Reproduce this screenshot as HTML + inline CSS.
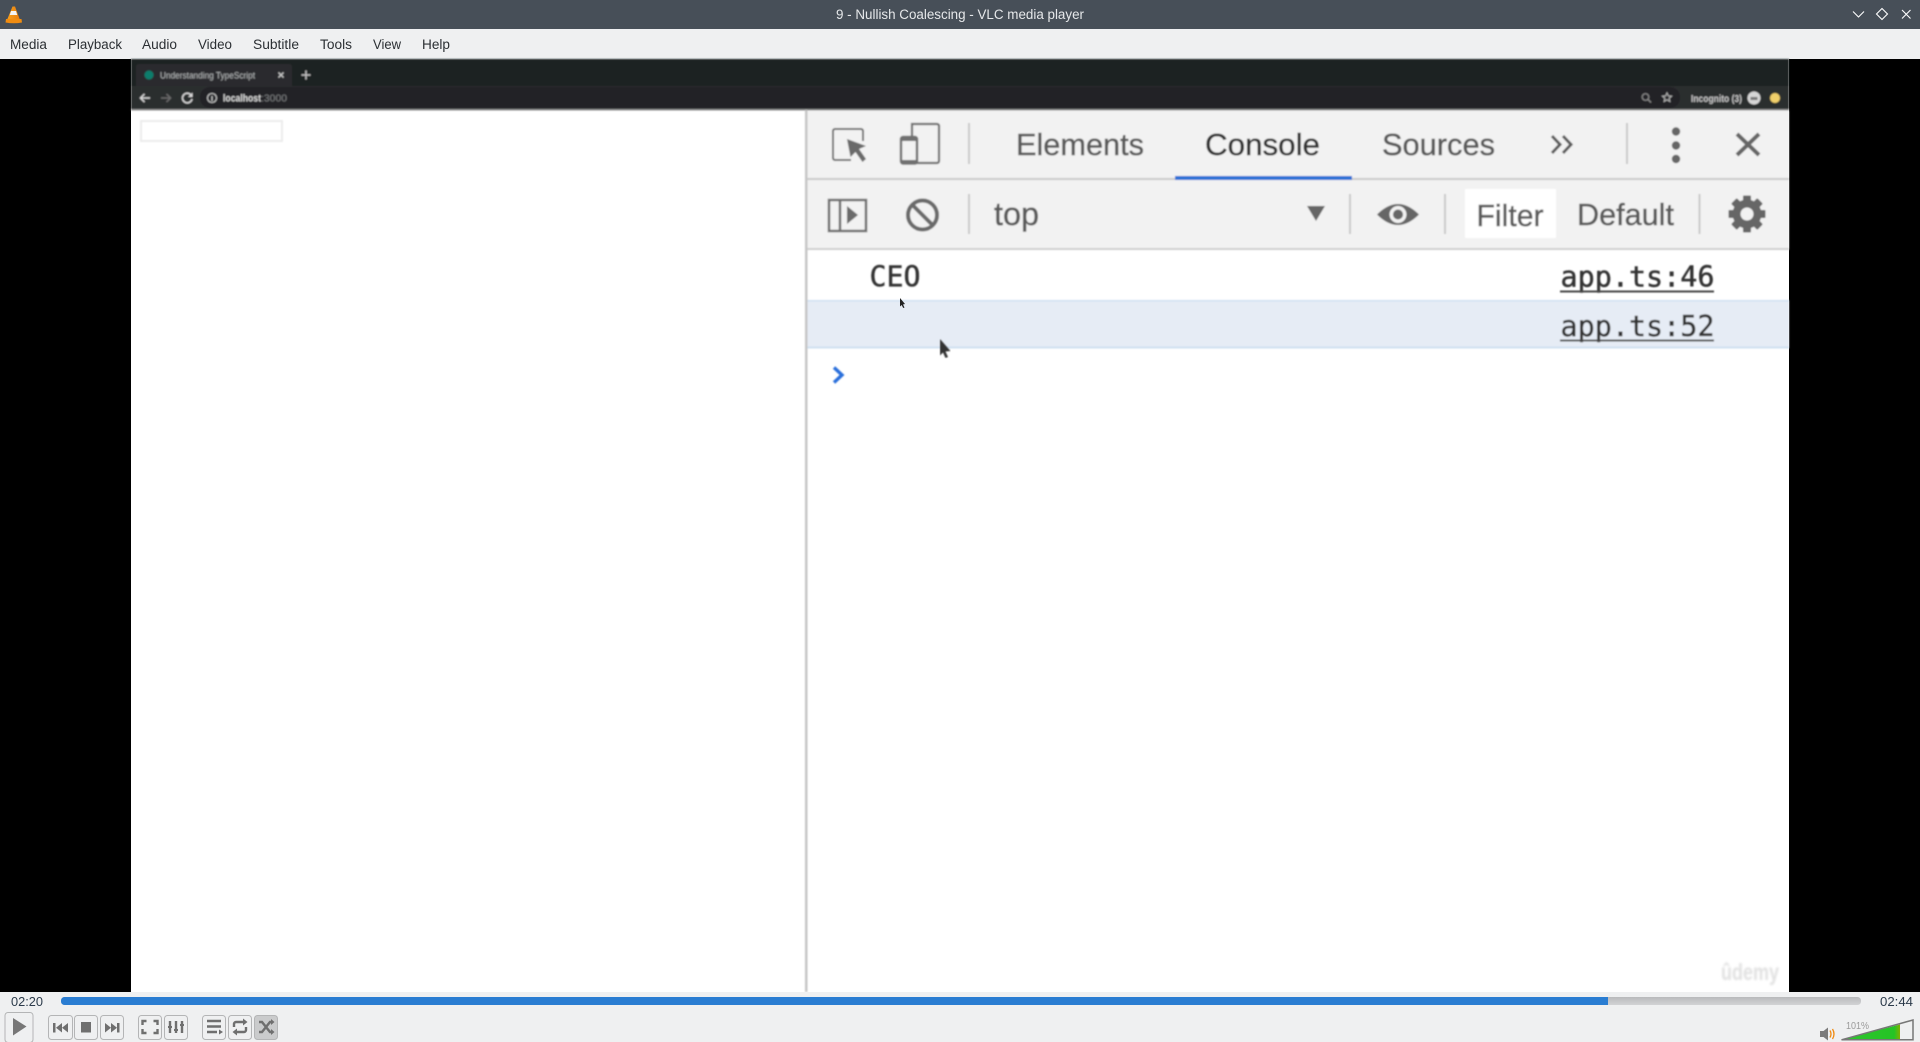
<!DOCTYPE html>
<html><head><meta charset="utf-8"><title>9 - Nullish Coalescing - VLC media player</title>
<style>
html,body{margin:0;padding:0;background:#000;width:1920px;height:1042px;overflow:hidden}
svg{display:block}
text{font-family:"Liberation Sans",sans-serif}
.m{font-size:13.5px;fill:#2b2f33}
.d{font-size:31px;fill:#5a5a5a;stroke:#5a5a5a;stroke-width:.45}
.mono{font-family:"DejaVu Sans Mono","Liberation Mono",monospace;font-size:28.5px;fill:#333;stroke:#333;stroke-width:.45}
.b{fill:#eff0f1;stroke:#b4b5b6;stroke-width:1}
.i{fill:#6f6f6f}
.s{fill:none;stroke:#6f6f6f;stroke-width:2.4}
</style></head><body>
<svg width="1920" height="1042" viewBox="0 0 1920 1042" xmlns="http://www.w3.org/2000/svg">
<defs>
<filter id="bl" x="-2%" y="-2%" width="104%" height="104%"><feGaussianBlur stdDeviation="0.7"/></filter>
<filter id="bl3" x="-20%" y="-20%" width="140%" height="140%"><feGaussianBlur stdDeviation="1.1"/></filter>
<linearGradient id="vg" x1="0" x2="1" y1="0" y2="0"><stop offset="0" stop-color="#2fc42f"/><stop offset=".9" stop-color="#25c425"/><stop offset="1" stop-color="#80b000"/></linearGradient>
<linearGradient id="pg" x1="0" x2="0" y1="0" y2="1"><stop offset="0" stop-color="#b9babc"/><stop offset="1" stop-color="#d2d3d5"/></linearGradient>
<linearGradient id="cone" x1="0" x2="1" y1="0" y2="0"><stop offset="0" stop-color="#f7a11e"/><stop offset="1" stop-color="#e87d0d"/></linearGradient>
</defs>

<!-- title bar -->
<rect x="0" y="0" width="1920" height="29" fill="#474f58"/>
<g>
<path d="M12.500 6.500h2.500L20 20H7z" fill="url(#cone)"/>
<path d="M11 11h5l1.200 4H9.800z" fill="#f4f4f4"/>
<path d="M6 19h15.500l.5 3.500q-8 1.500-16.500 0z" fill="#f08c10"/>
</g>
<text x="960" y="19" text-anchor="middle" textLength="248" lengthAdjust="spacingAndGlyphs" style="font-size:13.5px;fill:#e6e8ea">9 - Nullish Coalescing - VLC media player</text>
<path d="M1853 11.500l5.500 5.500 5.500-5.500" fill="none" stroke="#fff" stroke-width="1.100"/>
<path d="M1882 8.500l5.500 5.500-5.500 5.500-5.500-5.500z" fill="none" stroke="#fff" stroke-width="1.100"/>
<path d="M1902 10l8.500 8.500M1910.500 10l-8.500 8.500" fill="none" stroke="#fff" stroke-width="1.100"/>

<!-- menu bar -->
<rect x="0" y="29" width="1920" height="30" fill="#eff0f1"/>
<g class="m">
<text class="m" x="10" y="49" textLength="37" lengthAdjust="spacingAndGlyphs">Media</text>
<text class="m" x="68" y="49" textLength="54" lengthAdjust="spacingAndGlyphs">Playback</text>
<text class="m" x="142" y="49" textLength="35" lengthAdjust="spacingAndGlyphs">Audio</text>
<text class="m" x="198" y="49" textLength="34" lengthAdjust="spacingAndGlyphs">Video</text>
<text class="m" x="253" y="49" textLength="46" lengthAdjust="spacingAndGlyphs">Subtitle</text>
<text class="m" x="320" y="49" textLength="32" lengthAdjust="spacingAndGlyphs">Tools</text>
<text class="m" x="373" y="49" textLength="28" lengthAdjust="spacingAndGlyphs">View</text>
<text class="m" x="422" y="49" textLength="28" lengthAdjust="spacingAndGlyphs">Help</text>
</g>

<!-- video -->
<rect x="0" y="59" width="1920" height="933" fill="#000"/>
<rect x="131" y="59" width="1658" height="933" fill="#fff"/>

<g filter="url(#bl)">
<!-- chrome strip -->
<rect x="131" y="59" width="1658" height="27" fill="#1d2022"/>
<path d="M136 86v-19q0-3 3-3h150q3 0 3 3v19z" fill="#2a2c2e"/>
<circle cx="149" cy="75" r="4.500" fill="#0f7d6c"/>
<text x="160" y="78.500" textLength="95" lengthAdjust="spacingAndGlyphs" style="font-size:9.5px;fill:#b4b6b8">Understanding TypeScript</text>
<path d="M278.500 72.500l5 5M283.500 72.500l-5 5" stroke="#c8c8c8" stroke-width="1.300"/>
<path d="M306 70.500v9M301.500 75h9" stroke="#c0c0c0" stroke-width="1.500"/>
<rect x="131" y="86" width="1658" height="23" fill="#2b2d2f"/>
<rect x="131" y="109" width="1658" height="1.500" fill="#8d8d8d"/>
<rect x="200" y="87" width="1480" height="21" rx="10" fill="#222426"/>
<path d="M150 98h-9M144.500 94l-4 4 4 4" fill="none" stroke="#d8d8d8" stroke-width="1.500"/>
<path d="M161 98h9M166.500 94l4 4-4 4" fill="none" stroke="#6a6a6a" stroke-width="1.500"/>
<path d="M191 95a4.800 4.800 0 1 0 1 4" fill="none" stroke="#d8d8d8" stroke-width="1.500"/><path d="M192.500 92.500v4.500h-4.500z" fill="#d8d8d8"/>
<circle cx="212" cy="98" r="4.500" fill="none" stroke="#c8c8c8" stroke-width="1.100"/><path d="M212 96v5" stroke="#c8c8c8" stroke-width="1.200"/>
<text x="223" y="101.500" textLength="38" lengthAdjust="spacingAndGlyphs" style="font-size:10.5px;fill:#d8d8d8;font-weight:bold">localhost</text>
<text x="261" y="101.500" textLength="26" lengthAdjust="spacingAndGlyphs" style="font-size:10.5px;fill:#7a7c7e">:3000</text>
<circle cx="1645.500" cy="97" r="3.300" fill="none" stroke="#8a8a8a" stroke-width="1.200"/><path d="M1648 99.500l3 3" stroke="#8a8a8a" stroke-width="1.300"/>
<path d="M1667 93l1.300 2.900 3.200.3-2.400 2.100.7 3.100-2.800-1.600-2.800 1.600.7-3.100-2.400-2.100 3.200-.3z" fill="none" stroke="#b0b0b0" stroke-width="1.100"/>
<text x="1691" y="102" textLength="51" lengthAdjust="spacingAndGlyphs" style="font-size:10.5px;fill:#c4c4c4;font-weight:bold">Incognito (3)</text>
<circle cx="1754" cy="98" r="6.500" fill="#d6d6d6"/><path d="M1750.500 97h7v3h-7z" fill="#777"/>
<circle cx="1775" cy="98" r="5" fill="#f0cf6a"/>

<!-- page input -->
<rect x="141" y="121" width="141" height="20" fill="#fff" stroke="#ececec" stroke-width="2"/>

<!-- devtools -->
<rect x="805" y="110" width="2.500" height="882" fill="#c6c6c6"/>
<rect x="807.500" y="111" width="981.500" height="67" fill="#f2f2f2"/>
<rect x="807.500" y="178" width="981.500" height="2" fill="#c9c9c9"/>
<rect x="807.500" y="180" width="981.500" height="68" fill="#f2f2f2"/>
<rect x="807.500" y="248" width="981.500" height="2" fill="#cfcfcf"/>

<!-- inspect -->
<path d="M851 160h-16a2 2 0 0 1-2-2v-27a2 2 0 0 1 2-2h26a2 2 0 0 1 2 2v10" fill="none" stroke="#707070" stroke-width="2"/>
<path d="M847 139l19 7-7 3 7 10-3.500 3-7-10-5 5z" fill="#6a6a6a"/>
<!-- device -->
<path d="M912 136v-12h25a2 2 0 0 1 2 2v35a2 2 0 0 1-2 2h-21" fill="none" stroke="#707070" stroke-width="2.200"/>
<rect x="901" y="137" width="16" height="26.500" rx="2" fill="none" stroke="#707070" stroke-width="2.400"/>
<rect x="901" y="138" width="16" height="3" fill="#707070"/><rect x="901" y="160" width="16" height="3" fill="#707070"/>
<rect x="968" y="123" width="2" height="41" fill="#c9c9c9"/>
<text class="d" x="1016" y="155" textLength="128" lengthAdjust="spacingAndGlyphs">Elements</text>
<text class="d" x="1205" y="155" textLength="115" lengthAdjust="spacingAndGlyphs" style="fill:#333;stroke:#333">Console</text>
<rect x="1175" y="176" width="177" height="4" fill="#2a6fd6"/>
<text class="d" x="1382" y="155" textLength="113" lengthAdjust="spacingAndGlyphs">Sources</text>
<path d="M1552 136l8 8.500-8 8.500M1563 136l8 8.500-8 8.500" fill="none" stroke="#5c5c5c" stroke-width="3"/>
<rect x="1626" y="123" width="2" height="41" fill="#c9c9c9"/>
<circle cx="1676" cy="131.500" r="4.200" fill="#666"/><circle cx="1676" cy="145.500" r="4.200" fill="#666"/><circle cx="1676" cy="159" r="4.200" fill="#666"/>
<path d="M1737 134l22 21M1759 134l-22 21" stroke="#666" stroke-width="4"/>

<!-- row 2 -->
<rect x="829" y="200" width="37" height="31" fill="none" stroke="#707070" stroke-width="2.500"/>
<path d="M840 199v32" stroke="#707070" stroke-width="2.500"/>
<path d="M847 206l11 9-11 9z" fill="#6a6a6a"/>
<circle cx="922.500" cy="215" r="14.500" fill="none" stroke="#6a6a6a" stroke-width="4"/>
<path d="M912.500 205l20 20" stroke="#6a6a6a" stroke-width="4"/>
<rect x="968" y="194" width="2" height="40" fill="#c9c9c9"/>
<text class="d" x="994" y="225" textLength="45" lengthAdjust="spacingAndGlyphs" style="font-size:32px">top</text>
<path d="M1307 206h18l-9 15z" fill="#666"/>
<rect x="1349" y="194" width="2" height="40" fill="#c9c9c9"/>
<path d="M1377 214.500q21-21 42 0q-21 21-42 0z" fill="#666"/>
<circle cx="1398" cy="214.500" r="8.500" fill="#f2f2f2"/><circle cx="1398" cy="214.500" r="5" fill="#666"/>
<rect x="1444" y="194" width="2" height="40" fill="#c9c9c9"/>
<rect x="1465" y="189" width="91" height="49" fill="#fff"/>
<text class="d" x="1476.500" y="226" textLength="67" lengthAdjust="spacingAndGlyphs">Filter</text>
<text class="d" x="1577" y="225" textLength="97" lengthAdjust="spacingAndGlyphs">Default</text>
<rect x="1698.500" y="194" width="2" height="40" fill="#c9c9c9"/>
<g transform="translate(1747 214)" fill="#666">
<circle r="14.500"/>
<rect x="-4" y="-18.500" width="8" height="37" rx="1"/>
<rect x="-4" y="-18.500" width="8" height="37" rx="1" transform="rotate(45)"/>
<rect x="-4" y="-18.500" width="8" height="37" rx="1" transform="rotate(90)"/>
<rect x="-4" y="-18.500" width="8" height="37" rx="1" transform="rotate(135)"/>
<circle r="6.500" fill="#f2f2f2"/>
</g>

<!-- console -->
<text class="mono" x="869.500" y="286.500" textLength="51" lengthAdjust="spacingAndGlyphs">CEO</text>
<text class="mono" x="1560.500" y="286.500" textLength="154" lengthAdjust="spacingAndGlyphs">app.ts:46</text>
<rect x="1560" y="290.500" width="154" height="2" fill="#444"/>
<rect x="807.500" y="300" width="981.500" height="48" fill="#e6ecf5"/>
<rect x="807.500" y="300" width="981.500" height="1.500" fill="#cfe0f1"/>
<rect x="807.500" y="346.500" width="981.500" height="2" fill="#cfe0f1"/>
<text class="mono" x="1560.500" y="336" textLength="154" lengthAdjust="spacingAndGlyphs">app.ts:52</text>
<rect x="1560" y="339.500" width="154" height="2" fill="#444"/>
<path d="M834 367.500l8 7.500-8 7.500" fill="none" stroke="#2b6fdb" stroke-width="3.400"/>
</g>

<!-- cursors -->
<path d="M900 298l5 6-2 .5 1.500 3-1.300.5-1.500-3-1.700 1.500z" fill="#222"/>
<path d="M940 339l10.500 12-5 .5 2.500 5.500-2.500 1-2.500-5.500-3 3z" fill="#333" filter="url(#bl)"/>

<!-- watermark -->
<text x="1721" y="980" textLength="58" lengthAdjust="spacingAndGlyphs" filter="url(#bl3)" style="font-size:23px;font-weight:bold;fill:#e0e0e0">ûdemy</text>

<!-- controls -->
<rect x="0" y="992" width="1920" height="50" fill="#eff0f1"/>
<text x="11" y="1006" textLength="32" lengthAdjust="spacingAndGlyphs" style="font-size:13px;fill:#2b3a4a">02:20</text>
<text x="1880" y="1006" textLength="33" lengthAdjust="spacingAndGlyphs" style="font-size:13px;fill:#2b3a4a">02:44</text>
<rect x="61" y="997" width="1800" height="8" rx="3.500" fill="url(#pg)"/>
<path d="M64.500 997H1608v8H64.500a3.500 3.500 0 0 1-3.500-3.500v-1a3.500 3.500 0 0 1 3.500-3.500z" fill="#2a7dd2"/>

<rect class="b" x="5" y="1012.500" width="28" height="30" rx="3"/>
<path d="M13 1018l13.500 8.500-13.500 9z" fill="#777"/>

<rect class="b" x="48.500" y="1015.500" width="24" height="24" rx="3"/>
<rect class="b" x="74.500" y="1015.500" width="23" height="24" rx="3"/>
<rect class="b" x="100.500" y="1015.500" width="23" height="24" rx="3"/>
<path d="M53 1023h2.500v9.500H53zM62 1023v9.500l-6-4.750zM68 1023v9.500l-6-4.750z" class="i"/>
<rect x="81" y="1022" width="10" height="10.500" class="i"/>
<path d="M105 1023v9.500l6-4.750zM111 1023v9.500l6-4.750zM117 1023h2.500v9.500H117z" class="i"/>

<rect class="b" x="138.500" y="1015.500" width="23" height="24" rx="3"/>
<rect class="b" x="164.500" y="1015.500" width="23" height="24" rx="3"/>
<path d="M142.500 1025v-4h4M153.500 1021h4v4M157.500 1029v4h-4M146.500 1033h-4v-4" class="s"/>
<path d="M170 1021v12M176 1021v12M182 1021v12" class="s"/>
<path d="M168 1026h4v2h-4zM174 1029h4v2h-4zM180 1024h4v2h-4z" class="i"/>

<rect class="b" x="202.500" y="1015.500" width="23" height="24" rx="3"/>
<rect class="b" x="228.500" y="1015.500" width="23" height="24" rx="3"/>
<rect x="254.500" y="1015.500" width="23" height="24" rx="3" fill="#cacbcc" stroke="#b4b5b6"/>
<path d="M207 1021h14M207 1026.500h14M207 1032h10" class="s"/>
<path d="M219 1029.500l4 2.500-4 2.500z" class="i"/>
<path d="M234 1027v-3a2 2 0 0 1 2-2h8M246 1027v3a2 2 0 0 1-2 2h-8" class="s"/>
<path d="M243 1018.500l4.500 3.500-4.500 3.500zM237 1028.500l-4.500 3.500 4.500 3.500z" class="i"/>
<path d="M259 1022h3l8 10h2M259 1032h3l8-10h2" class="s"/>
<path d="M271 1019l3.500 3-3.500 3zM271 1029l3.500 3-3.500 3z" class="i"/>

<!-- volume -->
<path d="M1820 1031h3.500l4.500-3.500v13l-4.500-3.500h-3.500z" fill="#7b7b7b"/>
<path d="M1830 1030.500q2 3.500 0 7M1832.500 1029q3 5 0 10" fill="none" stroke="#f08a10" stroke-width="1.300"/>
<text x="1846" y="1029" textLength="23" lengthAdjust="spacingAndGlyphs" style="font-size:10.5px;fill:#9a9a9a">101%</text>
<path d="M1842 1039.500L1900 1024.500V1039.500z" fill="url(#vg)"/>
<path d="M1841.500 1039.800L1913 1020v19.800z" fill="none" stroke="#777" stroke-width="1.500"/>
</svg>
</body></html>
